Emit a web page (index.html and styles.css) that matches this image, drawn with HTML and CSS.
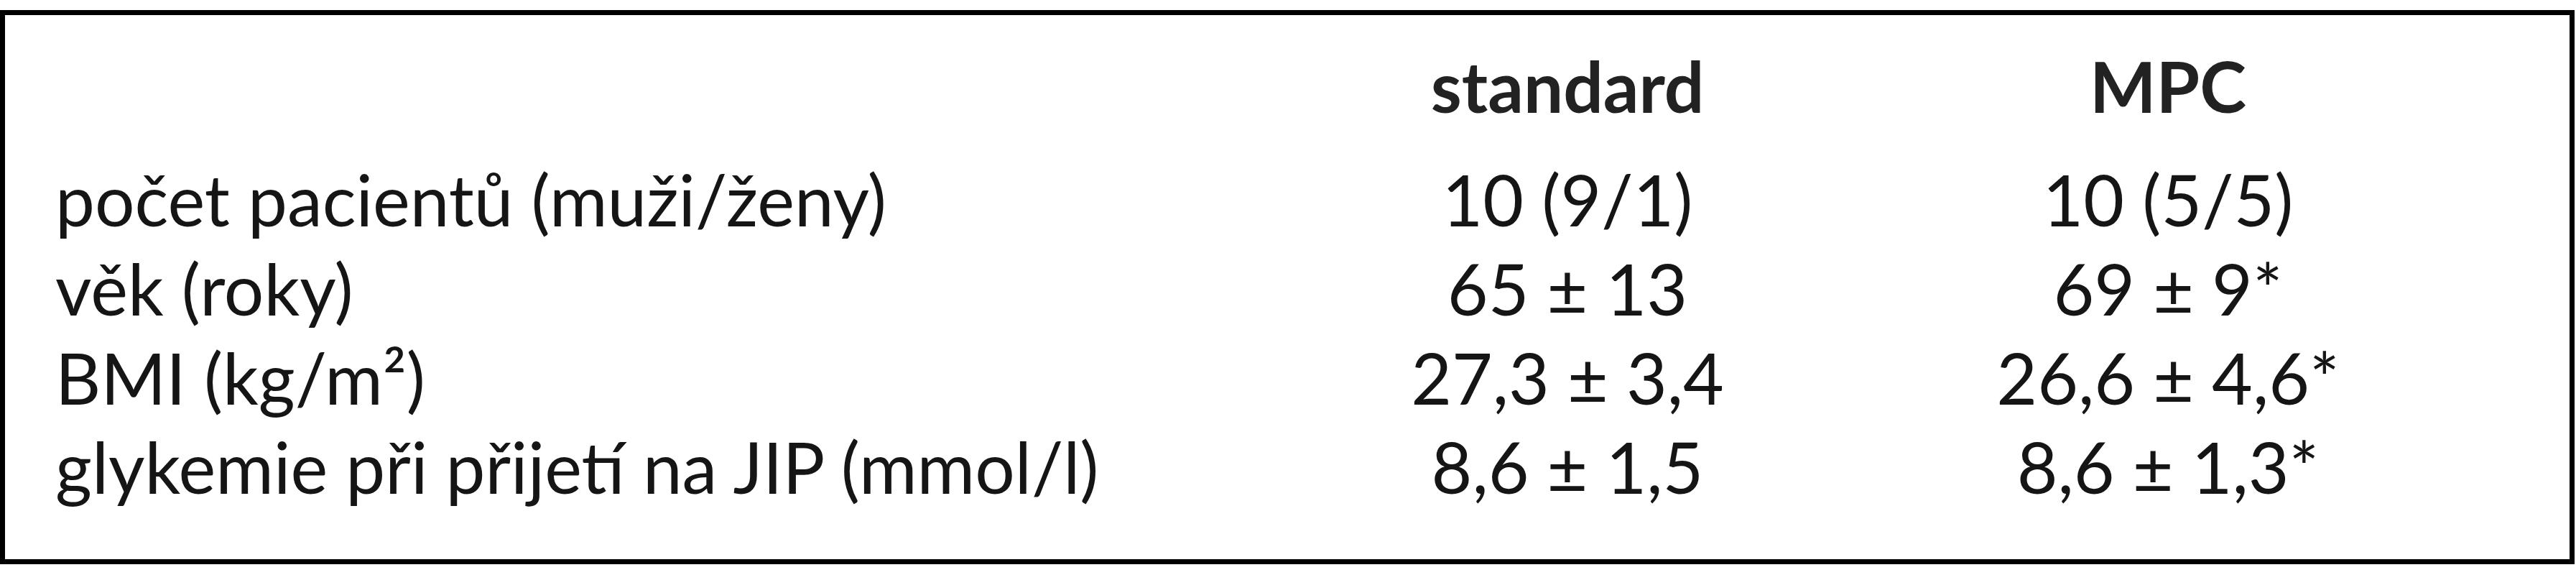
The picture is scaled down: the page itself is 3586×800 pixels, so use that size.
FILE: index.html
```html
<!DOCTYPE html>
<html lang="cs">
<head>
<meta charset="utf-8">
<title>Tabulka</title>
<link rel="stylesheet" href="styles.css">
</head>
<body>
<div class="frame">
  <div class="grid">
    <div class="cell head-label"></div>
    <div class="cell head">standard</div>
    <div class="cell head">MPC</div>

    <div class="cell label first">počet pacientů (muži/ženy)</div>
    <div class="cell val first">10 (9/1)</div>
    <div class="cell val first">10 (5/5)</div>

    <div class="cell label">věk (roky)</div>
    <div class="cell val">65 ± 13</div>
    <div class="cell val">69 ± 9*</div>

    <div class="cell label">BMI (kg/m²)</div>
    <div class="cell val">27,3 ± 3,4</div>
    <div class="cell val">26,6 ± 4,6*</div>

    <div class="cell label">glykemie při přijetí na JIP (mmol/l)</div>
    <div class="cell val">8,6 ± 1,5</div>
    <div class="cell val">8,6 ± 1,3*</div>
  </div>
</div>
</body>
</html>
```

FILE: styles.css
```css
html, body {
  margin: 0;
  padding: 0;
  background: #ffffff;
}

body {
  font-family: "Lato", "Open Sans", "DejaVu Sans", sans-serif;
  color: #151515;
}

.frame {
  margin-top: 14px;
  width: 3584px;
  box-sizing: border-box;
  border: 7px solid #000;
  padding: 36px 0 67px 70px;
}

.grid {
  display: grid;
  grid-template-columns: 1687px 836px 836px;
  font-size: 98px;
  line-height: 124px;
}

.cell {
  white-space: nowrap;
}

.head {
  font-weight: 700;
  text-align: center;
  color: #222;
}

.first {
  margin-top: 34px;
}

.val {
  text-align: center;
}
```
